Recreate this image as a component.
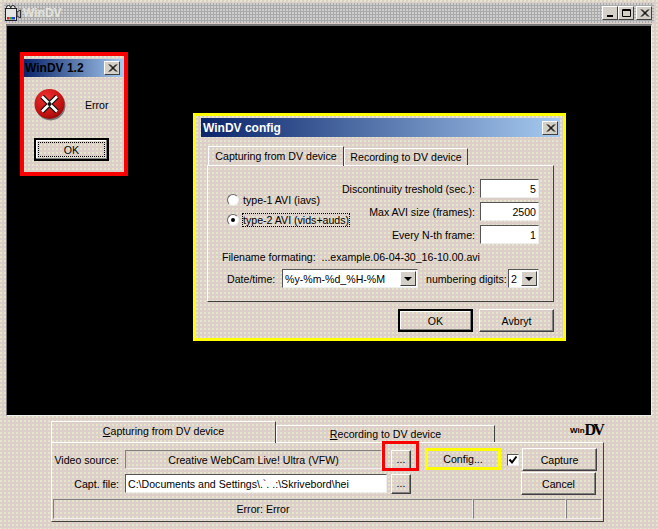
<div class="win">
  <div class="titlebar">
    <svg class="appicon" width="16" height="16" viewBox="0 0 16 16">
      <circle cx="3.500" cy="2.500" r="2" fill="#eee" stroke="#222"/>
      <circle cx="8" cy="2.500" r="2" fill="#eee" stroke="#222"/>
      <rect x="0.500" y="3.500" width="11" height="12" fill="#e4e4e4" stroke="#222"/>
      <path d="M12 7l3.500-2v8L12 11z" fill="#bbb" stroke="#333"/>
      <rect x="2" y="12" width="2.500" height="2.500" fill="#e02020"/>
      <rect x="4.500" y="12" width="2.500" height="2.500" fill="#20b030"/>
      <rect x="7" y="12" width="3" height="2.500" fill="#2040e0"/>
    </svg>
    <span class="wintitle">WinDV</span>
    <div class="winbtns">
      <span class="cap"><svg width="11" height="10" viewBox="0 0 11 10"><rect x="2" y="7" width="6" height="2" fill="#000"/></svg></span>
      <span class="cap"><svg width="11" height="10" viewBox="0 0 11 10"><path d="M1.500 1.500h8v7h-8zM1 2.500h9" fill="none" stroke="#000"/></svg></span>
      <span class="cap gap"><svg width="11" height="10" viewBox="0 0 11 10"><path d="M2 1.500l7 7M3 1.500l7 7M9 1.500l-7 7M10 1.500l-7 7" stroke="#000"/></svg></span>
    </div>
  </div>

  <div class="canvas">
    <div class="mark red errormark">
      <div class="dlg err">
        <div class="dtitle errtitle"><span>WinDV 1.2</span><span class="cap big"><svg width="11" height="10" viewBox="0 0 11 10"><path d="M2 1.500l7 7M3 1.500l7 7M9 1.500l-7 7M10 1.500l-7 7" stroke="#000"/></svg></span></div>
        <div class="errbody">
          <svg width="32" height="33" viewBox="0 0 32 33">
            <defs><radialGradient id="rb" cx="0.4" cy="0.3" r="0.8"><stop offset="0" stop-color="#f03030"/><stop offset="0.7" stop-color="#c01010"/><stop offset="1" stop-color="#800808"/></radialGradient></defs>
            <circle cx="16.500" cy="17.500" r="15" fill="#777"/>
            <circle cx="15.500" cy="16" r="15" fill="url(#rb)"/>
            <path d="M8 8.500L23 23.500M23 8.500L8 23.500" stroke="#111" stroke-width="5"/>
            <path d="M8 8.500L23 23.500M23 8.500L8 23.500" stroke="#fff" stroke-width="2.500"/>
            <circle cx="15.500" cy="16" r="2" fill="#111"/>
          </svg>
          <span class="errtxt">Error</span>
        </div>
        <div class="okwrap"><div class="btn default errok"><span class="focus">OK</span></div></div>
      </div>
    </div>

    <div class="mark yellow configmark">
      <div class="dlg cfg">
        <div class="dtitle cfgtitle"><span>WinDV config</span><span class="cap big"><svg width="11" height="10" viewBox="0 0 11 10"><path d="M2 1.500l7 7M3 1.500l7 7M9 1.500l-7 7M10 1.500l-7 7" stroke="#000"/></svg></span></div>
        <div class="cfgtabs">
          <span class="ctab active">Capturing from DV device</span>
          <span class="ctab second">Recording to DV device</span>
        </div>
        <div class="cfgpane">
          <div class="toprow">
            <div class="radios">
              <div class="radio"><span class="rdot"></span>type-1 AVI (iavs)</div>
              <div class="radio"><span class="rdot on"></span><span class="focus2">type-2 AVI (vids+auds)</span></div>
            </div>
            <div class="fields">
              <div class="field"><span>Discontinuity treshold (sec.):</span><span class="input num">5</span></div>
              <div class="field"><span>Max AVI size (frames):</span><span class="input num">2500</span></div>
              <div class="field"><span>Every N-th frame:</span><span class="input num">1</span></div>
            </div>
          </div>
          <div class="fmt">Filename formating:&nbsp; ...example.06-04-30_16-10.00.avi</div>
          <div class="daterow">
            <span class="dlbl">Date/time:</span>
            <span class="input combo wide">%y-%m-%d_%H-%M<span class="arrow"></span></span>
            <span class="ndl">numbering digits:</span>
            <span class="input combo small">2<span class="arrow"></span></span>
          </div>
        </div>
        <div class="cfgbtns">
          <div class="btn default cbtn">OK</div>
          <div class="btn cbtn">Avbryt</div>
        </div>
      </div>
    </div>
  </div>

  <div class="bottom">
    <div class="btabs">
      <span class="btab active"><u>C</u>apturing from DV device</span>
      <span class="btab second"><u>R</u>ecording to DV device</span>
      <span class="logo"><small>Win</small><b>DV</b></span>
    </div>
    <div class="bpane">
      <div class="brow">
        <span class="lbl">Video source:</span>
        <span class="source">Creative WebCam Live! Ultra (VFW)</span>
        <div class="btn dots first">...</div>
        <div class="btn config">Config...</div>
        <span class="check"><svg width="10" height="10" viewBox="0 0 10 10"><path d="M1.500 4.500l2.500 3L8.500 1.500" fill="none" stroke="#000" stroke-width="2"/></svg></span>
        <div class="btn action">Capture</div>
      </div>
      <div class="brow two">
        <span class="lbl">Capt. file:</span>
        <span class="input path">C:\Documents and Settings\.`. .:\Skrivebord\hei</span>
        <div class="btn dots">...</div>
        <span class="fill"></span>
        <div class="btn action">Cancel</div>
      </div>
      <div class="status">
        <span class="s1">Error: Error</span><span class="s2"></span><span class="s3"></span>
      </div>
    </div>
  </div>
</div>

<style>
  :global(body) { margin: 0; background: #d8d1ca; }
  .win, .dlg {
    font-family: "Liberation Sans", Arial, sans-serif;
    font-size: 10.6px;
    color: #000;
    background-color: #d8d1ca;
    background-image:
      radial-gradient(circle at 1px 1px, #f2eecb 0.6px, transparent 0.9px),
      radial-gradient(circle at 3px 3px, #e8c8c8 0.6px, transparent 0.9px);
    background-size: 4px 4px;
  }
  .win { width: 658px; height: 529px; display: flex; flex-direction: column; box-sizing: border-box; overflow: hidden; }
  .titlebar { height: 20px; margin: 3px 4px 0; background: #a9a9a9; background-image: radial-gradient(circle at 1px 1px, #cfcfcf 0.7px, transparent 1px); background-size: 3px 3px; display: flex; align-items: center; gap: 2px; flex: none; box-sizing: border-box; padding: 0 2px 0 1px; }
  .wintitle { font-family: "Liberation Sans", sans-serif; font-weight: bold; font-size: 12px; color: #e4e4dc; }
  .winbtns { margin-left: auto; display: flex; }
  .cap { display: inline-flex; width: 16px; height: 14px; align-items: center; justify-content: center; background: #d4d0c8; border: 1px solid; border-color: #fff #404040 #404040 #fff; box-sizing: border-box; }
  .cap.gap { margin-left: 2px; }
  .canvas { position: relative; flex: none; height: 392px; margin: 1px 6px 0; background: #000; border: 1px solid; border-top-width: 2px; border-color: #777 #eee #eee #777; box-sizing: border-box; }

  .mark { position: absolute; box-sizing: border-box; }
  .red { border: 4px solid #fa0000; }
  .yellow { border: 3px solid #ffff00; }
  .errormark { left: 13px; top: 26px; width: 108px; height: 124px; }
  .configmark { left: 186px; top: 87px; width: 373px; height: 228px; }
  .dlg { box-sizing: border-box; height: 100%; display: flex; flex-direction: column; }
  .dtitle { display: flex; align-items: center; justify-content: space-between; flex: none; font-family: "Liberation Sans", sans-serif; font-weight: bold; font-size: 12px; background: linear-gradient(90deg, #0a246a, #a6caf0); }
  .errtitle { height: 18px; margin: 3px 0 0; padding: 0 4px 0 1px; color: #000; }
  .cfgtitle { height: 19px; margin: 2px 3px 0 5px; padding: 0 2px; color: #fff; }
  .errbody { display: flex; align-items: center; padding: 11px 0 0 10px; }
  .errtxt { margin-left: 19px; }
  .okwrap { padding: 17px 0 0 10px; }
  .errok { width: 75px; height: 23px; }

  .btn { display: flex; align-items: center; justify-content: center; box-sizing: border-box; flex: none; border: 1px solid; border-color: #fff #404040 #404040 #fff; box-shadow: inset -1px -1px 0 #808080; }
  .btn.default { border: 2px solid #000; box-shadow: inset -1px -1px 0 #808080, inset 1px 1px 0 #fff; }
  .focus { border: 1px dotted #000; width: 65px; height: 13px; display: flex; align-items: center; justify-content: center; }

  .cfgtabs { display: flex; padding: 0 0 0 12px; align-items: flex-end; height: 28px; flex: none; }
  .ctab { box-sizing: border-box; border: 1px solid; border-bottom: 0; border-color: #fff #404040 transparent #fff; text-align: center; white-space: nowrap; }
  .ctab.active { width: 136px; height: 20px; line-height: 19px; position: relative; top: 1px; z-index: 1; background: inherit; }
  .ctab.second { width: 124px; height: 17px; line-height: 16px; }
  .cfgpane { margin: 0 9px 0 11px; height: 137px; box-sizing: border-box; border: 1px solid; border-color: #fff #404040 #404040 #fff; padding: 0 14px 0 14px; flex: none; }
  .toprow { display: flex; justify-content: space-between; padding-top: 13px; }
  .radios { display: flex; flex-direction: column; padding: 11px 0 0 5px; width: 100px; flex: none; box-sizing: border-box; }
  .radio { display: flex; align-items: center; gap: 4px; height: 20px; white-space: nowrap; }
  .rdot { width: 12px; height: 12px; flex: none; border-radius: 50%; background: #fff; border: 1px solid; border-color: #666 #eee #eee #666; box-sizing: border-box; display: inline-flex; align-items: center; justify-content: center; }
  .rdot.on::after { content: ""; width: 4px; height: 4px; border-radius: 50%; background: #000; }
  .focus2 { outline: 1px dotted #000; }
  .fields { display: flex; flex-direction: column; gap: 4px; }
  .field { display: flex; align-items: center; justify-content: flex-end; gap: 5px; white-space: nowrap; }
  .input { background: #fff; box-sizing: border-box; border: 1px solid; border-color: #555 #eee #eee #555; display: inline-flex; align-items: center; white-space: nowrap; flex: none; }
  .num { width: 59px; height: 19px; justify-content: flex-end; padding-right: 2px; }
  .fmt { margin-top: 5px; height: 16px; line-height: 16px; white-space: nowrap; }
  .daterow { display: flex; align-items: center; margin: 4px 0 0 5px; height: 19px; white-space: nowrap; }
  .dlbl { width: 55px; flex: none; }
  .combo { height: 19px; justify-content: space-between; padding: 0 1px 0 2px; }
  .wide { width: 136px; }
  .small { width: 31px; margin-left: 4px; }
  .ndl { margin-left: 8px; width: 78px; flex: none; }
  .arrow { width: 16px; height: 15px; flex: none; background: #d4d0c8; border: 1px solid; border-color: #fff #404040 #404040 #fff; box-sizing: border-box; position: relative; }
  .arrow::after { content: ""; position: absolute; left: 3px; top: 5px; border: 4px solid transparent; border-top-color: #000; border-bottom: 0; }
  .cfgbtns { display: flex; justify-content: flex-end; gap: 6px; padding: 7px 9px 0 0; }
  .cbtn { width: 75px; height: 23px; }

  .bottom { margin: 5px 0 0 51px; width: 553px; flex: none; }
  .btabs { display: flex; align-items: flex-end; height: 21px; }
  .btab { box-sizing: border-box; height: 20px; text-align: center; white-space: nowrap; border: 1px solid; border-bottom: 0; border-color: #fff #404040 transparent #fff; flex: none; }
  .btab.active { width: 225px; height: 22px; line-height: 19px; position: relative; top: 1px; z-index: 1; background: inherit; }
  .btab.second { width: 219px; height: 17px; line-height: 16px; }
  .logo { margin-left: 75px; align-self: flex-start; font-family: "Liberation Serif", serif; white-space: nowrap; line-height: 16px; margin-top: 1px; }
  .logo small { font-family: "Liberation Sans", sans-serif; font-weight: bold; font-size: 8px; position: relative; top: -2px; }
  .logo b { font-size: 16px; letter-spacing: -3px; }
  .bpane { box-sizing: border-box; height: 80px; border: 1px solid; border-color: #fff #404040 #404040 #fff; padding: 7px 1px 0; }
  .brow { display: flex; align-items: center; height: 19px; white-space: nowrap; }
  .brow.two { margin-top: 5px; }
  .lbl { width: 66px; text-align: right; flex: none; }
  .source { box-sizing: border-box; width: 257px; height: 19px; margin-left: 6px; display: flex; align-items: center; justify-content: center; border: 1px solid; border-color: #808080 #eee #eee #808080; flex: none; }
  .dots { width: 20px; height: 20px; padding-bottom: 2px; }
  .dots.first { margin-left: 9px; position: relative; }
  .dots.first::after { content: ""; position: absolute; left: -10px; top: -10px; right: -9px; bottom: -2px; border: 3px solid #fa0000; }
  .config { width: 76px; height: 22px; margin-left: 14px; position: relative; top: -1px; border-color: transparent; box-shadow: none; }
  .config::after { content: ""; position: absolute; inset: -1px; border: 3px solid #ffff00; }
  .check { width: 12px; height: 12px; margin-left: 6px; background: #fff; border: 1px solid; border-color: #555 #eee #eee #555; box-sizing: border-box; display: inline-flex; align-items: center; justify-content: center; flex: none; }
  .action { width: 75px; height: 23px; margin-left: 3px; }
  .path { width: 262px; height: 19px; margin-left: 6px; padding-left: 2px; margin-right: 4px; }
  .fill { flex: 1; }
  .two .action { margin-right: 6px; }
  .brow:first-child { padding-right: 6px; }
  .status { display: flex; height: 20px; margin-top: 6px; }
  .status span { box-sizing: border-box; border: 1px solid; border-color: #808080 #eee #eee #808080; display: flex; align-items: center; justify-content: center; }
  .s1 { width: 420px; }
  .s2 { width: 93px; }
  .s3 { flex: 1; }
</style>
